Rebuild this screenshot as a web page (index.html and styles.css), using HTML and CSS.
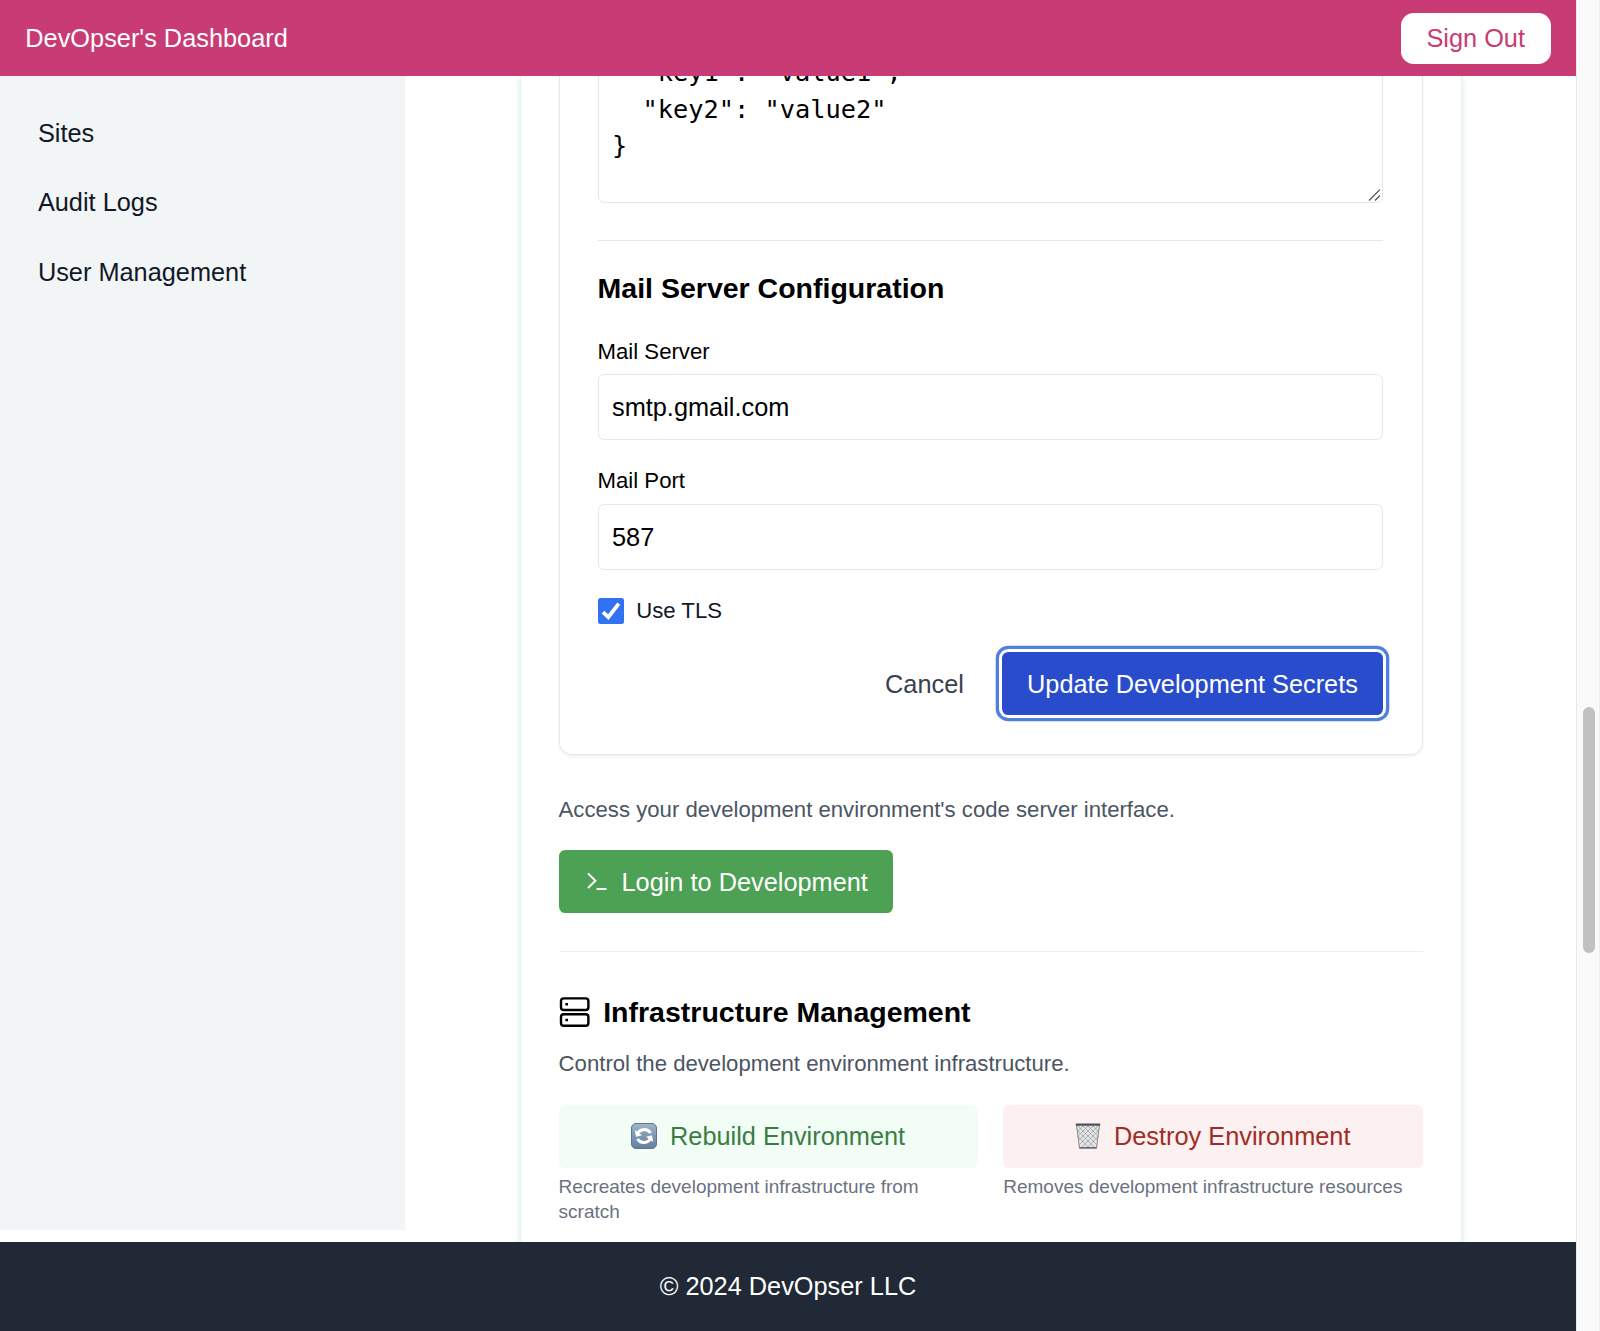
FILE: index.html
```html
<!DOCTYPE html>
<html lang="en">
<head>
    <meta charset="UTF-8">
    <meta name="viewport" content="width=device-width, initial-scale=1.0">
    <title>DevOpser's Dashboard</title>
    <link rel="stylesheet" href="styles.css">
</head>
<body>
    <div class="page">
        <header class="header">
            <span>DevOpser's Dashboard</span>
            <button class="sign-out">Sign Out</button>
        </header>
        <div class="content">
            <nav class="sidebar">
                <a>Sites</a>
                <a>Audit Logs</a>
                <a>User Management</a>
            </nav>
            <main class="main">
                <section class="card">
                    <form class="secrets-form">
                        <div class="textarea-wrap">
                            <textarea class="secrets" spellcheck="false">{
  "key1": "value1",
  "key2": "value2"
}</textarea>
                            <svg class="grip" viewBox="0 0 12 12"><path d="M1 11.5L11 1.5M6.5 11.5L11 7" stroke="#555" stroke-width="1.2" fill="none"/></svg>
                        </div>
                        <div class="mail">
                            <h4>Mail Server Configuration</h4>
                            <div class="field">
                                <label for="mailServer">Mail Server</label>
                                <input type="text" id="mailServer" value="smtp.gmail.com">
                            </div>
                            <div class="field">
                                <label for="mailPort">Mail Port</label>
                                <input type="text" id="mailPort" value="587">
                            </div>
                            <div class="check-row">
                                <svg class="checkbox" viewBox="0 0 26 26"><rect width="26" height="26" rx="2.5" fill="#3171f2"/><path d="M5 14.2L10.3 19.2L20.8 5.6" stroke="#fff" stroke-width="3.8" fill="none"/></svg>
                                <span>Use TLS</span>
                            </div>
                        </div>
                        <div class="actions">
                            <button type="button" class="cancel">Cancel</button>
                            <button type="button" class="update">Update Development Secrets</button>
                        </div>
                    </form>

                    <p class="text">Access your development environment's code server interface.</p>
                    <button class="login">
                        <svg viewBox="0 0 24 24" width="25" height="25"><path d="M3.8 4.2L11 11.2L3.8 18.2M12 19.2H21.6" stroke="#fff" stroke-width="1.9" fill="none"/></svg>
                        Login to Development
                    </button>

                    <div class="infra">
                        <h3>
                            <svg viewBox="0 0 32 32" width="32" height="32" fill="none" stroke="#000" stroke-width="2.4"><rect x="2" y="2.4" width="27.4" height="11.6" rx="2.8"/><rect x="2" y="18.2" width="27.4" height="11.6" rx="2.8"/><path d="M6.4 8.3h2.6M6.4 24h2.6" stroke-width="2.6"/></svg>
                            Infrastructure Management
                        </h3>
                        <p class="text">Control the development environment infrastructure.</p>
                        <div class="infra-grid">
                            <div>
                                <button class="env rebuild">
                                    <svg viewBox="0 0 26 26" width="26" height="26">
                                        <defs><linearGradient id="tile" x1="0" y1="0" x2="0" y2="1"><stop offset="0" stop-color="#a3b5c9"/><stop offset=".5" stop-color="#7e97b3"/><stop offset="1" stop-color="#667f9c"/></linearGradient></defs>
                                        <rect x=".5" y=".5" width="25" height="25" rx="4.5" fill="url(#tile)" stroke="#62748b"/>
                                        <path d="M6 11.5C8 5.8 16 4.8 19.6 10M20 14.5C18 20.3 10 21.4 6.4 16" stroke="#fff" stroke-width="3" fill="none"/>
                                        <path d="M3.8 7L5 13.8L11 12.2ZM22.2 19L21 12.2L15 13.8Z" fill="#fff"/>
                                    </svg>
                                    Rebuild Environment
                                </button>
                                <p class="hint">Recreates development infrastructure from scratch</p>
                            </div>
                            <div>
                                <button class="env destroy">
                                    <svg viewBox="0 0 26 26" width="26" height="26">
                                        <path d="M1.5 2H24.5L21.5 25H4.5Z" fill="#e4e5e6" stroke="#85898d"/>
                                        <path d="M2 7L20 25M3 3L22 22M8 3L23 18M13 3L24 14M18 3L24 9M3 13L14 25M24 7L6 25M23 3L4 22M18 3L3 18M13 3L2 14M8 3L2 9M23 13L12 25" stroke="#999ea3" stroke-width=".8" fill="none"/>
                                        <path d="M.8 1.6H25.2" stroke="#4f5357" stroke-width="2.2"/>
                                        <path d="M4.3 24.8H21.7" stroke="#65696d" stroke-width="1.5"/>
                                    </svg>
                                    Destroy Environment
                                </button>
                                <p class="hint">Removes development infrastructure resources</p>
                            </div>
                        </div>
                    </div>
                </section>
            </main>
        </div>
        <footer class="footer">© 2024 DevOpser LLC</footer>
    </div>
    <div class="scrollbar"><div class="thumb"></div></div>
</body>
</html>
```

FILE: styles.css
```css
* {
    box-sizing: border-box;
}
body {
    margin: 0;
    height: 1331px;
    display: flex;
    overflow: hidden;
    font-family: "Liberation Sans", Arial, sans-serif;
    font-size: 25.33px;
    line-height: 38px;
    color: #111827;
    background-color: #fff;
}
h3, h4, p {
    margin: 0;
}
button, input {
    font: inherit;
}
button {
    border: none;
    padding: 0;
    white-space: nowrap;
}
svg {
    display: block;
    flex-shrink: 0;
}
.page {
    width: 1576px;
    display: flex;
    flex-direction: column;
}
.header {
    height: 76px;
    flex-shrink: 0;
    display: flex;
    align-items: center;
    justify-content: space-between;
    padding: 0 25.3px;
    background-color: #c83b75;
    color: #fff;
}
.sign-out {
    width: 150px;
    height: 51px;
    border-radius: 12.6px;
    background-color: #fff;
    color: #c83b75;
}
.content {
    height: 1166px;
    display: flex;
    overflow: hidden;
}
.sidebar {
    width: 405px;
    height: 1154px;
    flex-shrink: 0;
    display: flex;
    flex-direction: column;
    gap: 6.6px;
    padding: 25.3px;
    background-color: #f1f5f6;
}
.sidebar a {
    height: 63px;
    padding: 12.6px;
}
.main {
    flex: 1;
    padding: 0 114px 0 115px;
}
.card {
    height: 1300px;
    padding: 0 38.4px 0 37.6px;
    border: solid #dcfce7;
    border-width: 0 1.6px;
    box-shadow: 0 2px 6px rgba(0, 0, 0, 0.12);
}

/* secrets form */
.secrets-form {
    height: 678.5px;
    padding: 0 38.4px 0 38px;
    border: 1.6px solid #e5e7eb;
    border-top: none;
    border-radius: 0 0 12.6px 12.6px;
    box-shadow: 0 2px 3px rgba(0, 0, 0, 0.05);
}
.textarea-wrap {
    position: relative;
    height: 127px;
    display: flex;
    align-items: flex-end;
}
.secrets {
    display: block;
    width: 100%;
    height: 202px;
    flex-shrink: 0;
    padding: 15.5px 13.4px 0;
    border: 1.6px solid #e5e7eb;
    border-radius: 6.3px;
    font-family: "DejaVu Sans Mono", monospace;
    font-size: 25.33px;
    line-height: 36.5px;
    color: #000;
    resize: none;
    overflow: hidden;
}
.grip {
    position: absolute;
    right: 2px;
    bottom: 2px;
    width: 13px;
    height: 13px;
}
.mail {
    margin-top: 36.5px;
    padding-top: 25px;
    border-top: 1.6px solid #e5e7eb;
    color: #000;
}
h3, h4 {
    font-size: 28.5px;
    line-height: 44px;
    font-weight: bold;
    color: #000;
}
.mail h4 {
    margin-bottom: 26px;
}
.field {
    margin-bottom: 25px;
}
.field label {
    display: block;
    margin-bottom: 6.4px;
    font-size: 22.17px;
    line-height: 32px;
}
.field input {
    display: block;
    width: 100%;
    height: 66.5px;
    padding: 0 13.4px;
    border: 1.6px solid #e5e7eb;
    border-radius: 6.3px;
    color: #000;
}
.check-row {
    display: flex;
    align-items: center;
    gap: 12.6px;
    height: 32px;
    font-size: 22.17px;
    color: #111827;
}
.checkbox {
    width: 26px;
    height: 26px;
}
.actions {
    display: flex;
    justify-content: flex-end;
    gap: 12.6px;
    margin-top: 25px;
}
.cancel {
    height: 63px;
    padding: 0 25.3px;
    background: none;
    color: #374151;
}
.update {
    height: 63px;
    padding: 0 25.3px;
    border-radius: 6.3px;
    background-color: #294ccd;
    color: #fff;
    box-shadow: 0 0 0 3px #fff, 0 0 0 6.3px #4f80dc;
}

.text {
    font-size: 22.17px;
    line-height: 32px;
    color: #4b5563;
}
.secrets-form + .text {
    margin: 39.5px 0 24px;
}
.login {
    display: flex;
    align-items: center;
    gap: 12.6px;
    height: 63px;
    padding: 0 25.3px;
    border-radius: 6.3px;
    background-color: #4ca154;
    color: #fff;
}

/* infrastructure */
.infra {
    margin-top: 38px;
    padding-top: 38px;
    border-top: 1.6px solid #e6f6ee;
}
.infra h3 {
    display: flex;
    align-items: center;
    gap: 12.6px;
    margin-bottom: 14px;
}
.infra-grid {
    display: grid;
    grid-template-columns: 1fr 1fr;
    gap: 25.3px;
    margin-top: 24.6px;
}
.env {
    display: flex;
    align-items: center;
    justify-content: center;
    gap: 12.6px;
    width: 100%;
    height: 63px;
    border-radius: 6.3px;
}
.rebuild {
    background-color: #f1fdf5;
    color: #3a7d44;
}
.destroy {
    background-color: #fcf1f0;
    color: #a02c27;
}
.hint {
    margin-top: 6.5px;
    font-size: 19px;
    line-height: 25.3px;
    color: #6b7280;
}

.footer {
    height: 89px;
    flex-shrink: 0;
    display: flex;
    align-items: center;
    justify-content: center;
    padding-bottom: 1px;
    background-color: #212936;
    color: #fff;
}
.scrollbar {
    width: 24px;
    padding: 707px 4px 0 5.5px;
    border-left: 1.6px solid #e8e8e8;
    border-right: 1.6px solid #ededed;
    background-color: #fafafa;
}
.thumb {
    height: 246px;
    border-radius: 7px;
    background-color: #c1c1c1;
}
```
